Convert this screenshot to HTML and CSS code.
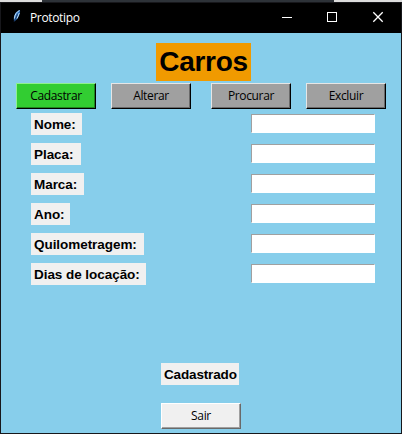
FILE: index.html
```html
<!DOCTYPE html>
<html lang="pt-BR">
<head>
<meta charset="utf-8">
<title>Prototipo</title>
<link rel="stylesheet" href="styles.css">
</head>
<body>
<div class="backdrop"></div>
<div class="window">
  <header class="titlebar">
    <svg class="feather" width="8" height="14" viewBox="0 0 8 14"><path d="M1 12C0 7 2.500 2 7 1C7.500 4 5.500 9.500 2.500 11.500Z" fill="#2e70bd"/><path d="M1.500 9.500C1.500 6 3.500 3 6.500 1.500M4 9.500L6.300 4" fill="none" stroke="#c4e2f7"/><path d="M1 13L4.500 5.500" stroke="#14284a" stroke-width=".8"/></svg>
    <span class="caption">Prototipo</span>
    <svg class="controls" width="104" height="12" viewBox="0 0 104 12" fill="none" stroke="#fff"><path d="M0 6.500H10M45.500 1.500H54.500V10.500H45.500Z" shape-rendering="crispEdges"/><path d="M91.300 1.300L100.700 10.700M100.700 1.300L91.300 10.700" stroke-width="1.3"/></svg>
  </header>
  <main class="content">
    <h1 class="title">Carros</h1>
    <nav class="actions">
      <button class="btn active">Cadastrar</button>
      <button class="btn">Alterar</button>
      <button class="btn third">Procurar</button>
      <button class="btn">Excluir</button>
    </nav>
    <form class="form">
      <div class="row"><label class="label nome" for="nome">Nome:</label><input class="entry" id="nome"></div>
      <div class="row"><label class="label placa" for="placa">Placa:</label><input class="entry" id="placa"></div>
      <div class="row"><label class="label marca" for="marca">Marca:</label><input class="entry" id="marca"></div>
      <div class="row"><label class="label ano" for="ano">Ano:</label><input class="entry" id="ano"></div>
      <div class="row"><label class="label km" for="km">Quilometragem:</label><input class="entry" id="km"></div>
      <div class="row"><label class="label dias" for="dias">Dias de locação:</label><input class="entry" id="dias"></div>
    </form>
    <div class="label status">Cadastrado</div>
    <button class="btn exit">Sair</button>
  </main>
</div>
</body>
</html>
```
FILE: styles.css
```css
* { box-sizing: border-box; }
body { margin: 0; width: 402px; height: 434px; overflow: hidden; background: #0d141a; }
.backdrop { height: 2px; background: linear-gradient(90deg, #dcdcdc 42px, #2d3238 42px 334px, #dcdcdc 334px); }
.window { height: 432px; border: 1px solid #17171b; display: flex; flex-direction: column; }
.titlebar { height: 30px; flex: none; background: #000; display: flex; align-items: center; padding: 0 15px 0 12px; }
.feather { flex: none; margin-right: 9px; margin-top: -4px; }
.caption { font: 12px/16px "Open Sans", sans-serif; color: #fff; letter-spacing: -.35px; margin-top: -1px; }
.controls { margin-left: auto; margin-top: -2px; }
.content { flex: 1; background: #87ceeb; padding: 10px 15px 0; }
.title { margin: 0 auto 2px 140px; width: 95px; height: 38px; background: #f09a00; font: bold 28px/37px "Liberation Sans", Arial, sans-serif; letter-spacing: -.3px; text-align: center; color: #000; }
.actions { display: flex; gap: 15px; height: 26px; }
.third { margin-left: 5px; }
.btn { width: 80px; height: 26px; padding: 0; border: 1px solid; border-color: #e6e6e6 #000 #000 #e6e6e6; border-radius: 0; background: #a0a0a0; box-shadow: inset -1px -1px #696969; text-align: center; font: 12px/16px "Open Sans", sans-serif; color: #000; letter-spacing: -.35px; }
.active { background: #32cd32; border-color: #90f090 #000 #000 #90f090; box-shadow: inset -1px -1px #208620; }
.form { margin: 4px 0 0 15px; }
.row { display: flex; justify-content: space-between; height: 30px; width: 344px; }
.label { height: 22px; padding-left: 3px; background: #f0f0f0; font: bold 13.5px/24px "Liberation Sans", Arial, sans-serif; color: #000; white-space: nowrap; letter-spacing: -.05px; }
.nome { width: 51px; }
.placa { width: 50px; }
.marca { width: 53px; }
.ano { width: 39px; }
.km { width: 113px; }
.dias { width: 115px; }
.entry { width: 124px; height: 19px; margin-top: 1px; padding: 0 2px; border: 1px solid; border-color: #a0a0a0 #fff #fff #a0a0a0; border-radius: 0; background: #fff; }
.status { width: 78px; margin: 70px 0 18px 145px; letter-spacing: -.15px; }
.exit { display: block; margin-left: 145px; background: #f0f0f0; border-color: #fff #696969 #696969 #fff; box-shadow: inset -1px -1px #a0a0a0; }
```
